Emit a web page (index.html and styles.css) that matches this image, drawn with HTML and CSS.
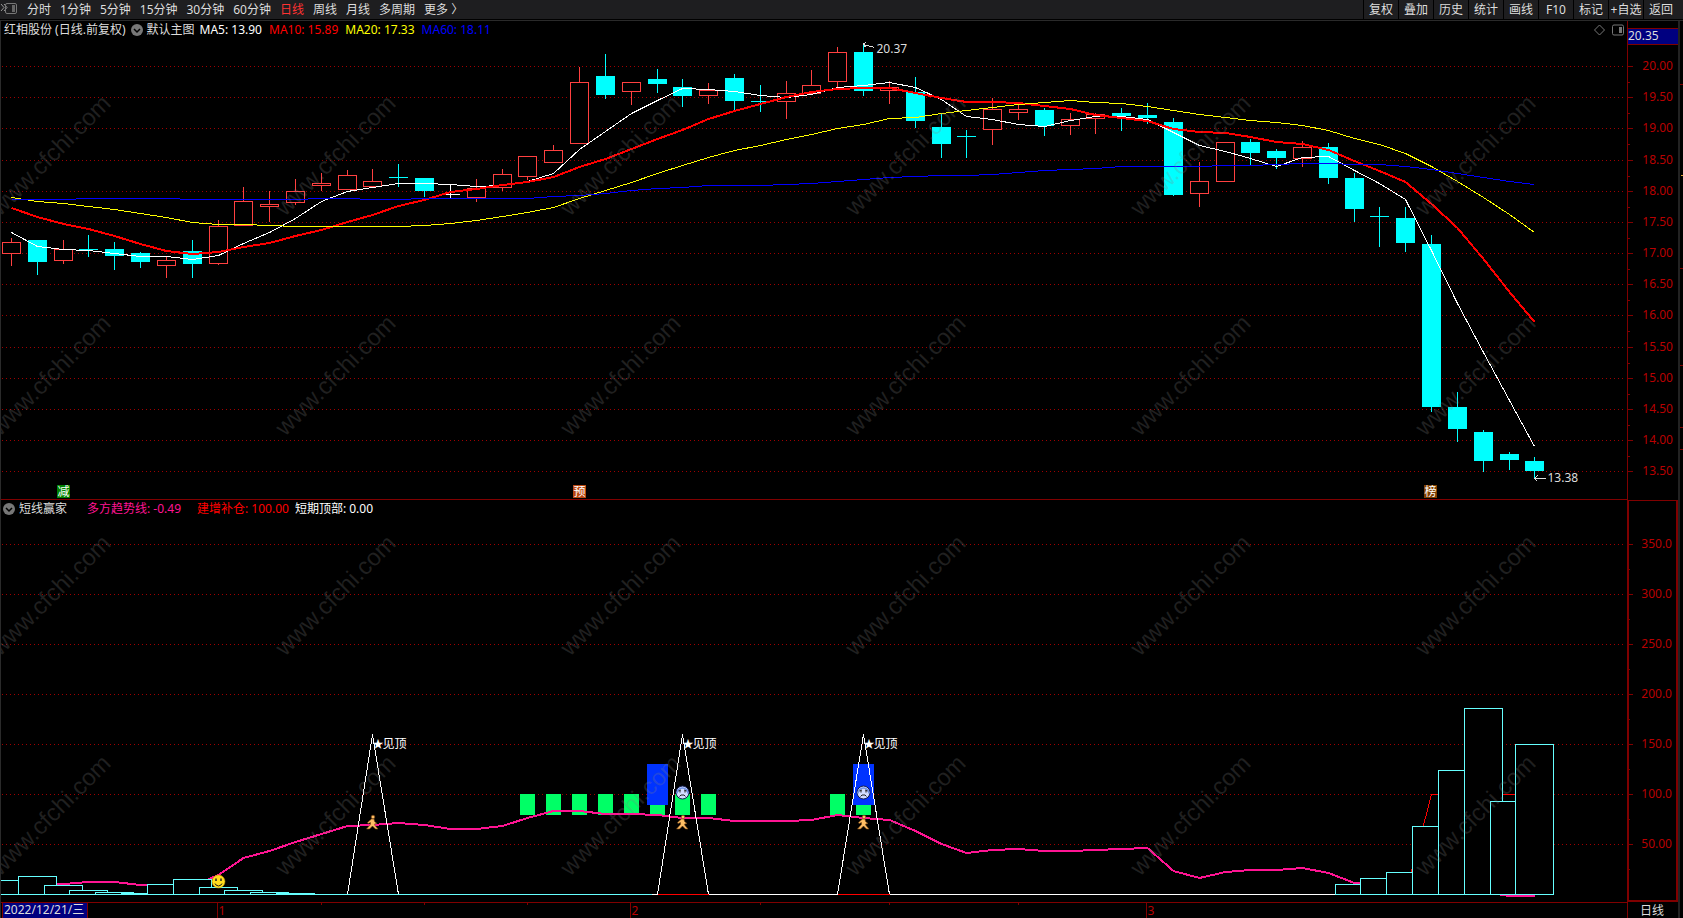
FILE: index.html
```
<!DOCTYPE html>
<html lang="zh-CN">
<head>
  <meta charset="UTF-8">
  <meta name="viewport" content="width=device-width, initial-scale=1.0">
  <title>红相股份 日线</title>
  <link rel="stylesheet" href="styles.css">
</head>
<body>
  <header class="toolbar">
    <button class="panel-toggle" aria-label="侧栏">
      <svg width="18" height="14" viewBox="0 0 18 14">
        <path d="M1 2 L4 5.500 L1 9 M4 2 L7 5.500 L4 9" stroke="#999" fill="none"/>
        <rect x="5.500" y="1.500" width="11" height="10" rx="1.500" stroke="#777" fill="none"/>
        <rect x="12" y="3" width="3" height="7" fill="#666"/>
      </svg>
    </button>
    <nav class="periods">
      <button>分时</button>
      <button>1分钟</button>
      <button>5分钟</button>
      <button>15分钟</button>
      <button>30分钟</button>
      <button>60分钟</button>
      <button class="active">日线</button>
      <button>周线</button>
      <button>月线</button>
      <button>多周期</button>
      <button>更多 〉</button>
    </nav>
    <div class="tools">
      <button>复权</button>
      <button>叠加</button>
      <button>历史</button>
      <button>统计</button>
      <button>画线</button>
      <button>F10</button>
      <button>标记</button>
      <button>+自选</button>
      <button>返回</button>
    </div>
  </header>

  <main class="terminal">
    <section class="plot price-plot">
      <svg id="priceChart" class="chart"></svg>
      <div class="legend">
        <span class="stock">红相股份 (日线.前复权)</span>
        <button class="drop" aria-label="主图指标">
          <svg width="12" height="12" viewBox="0 0 12 12"><circle cx="6" cy="6" r="6" fill="#777"/><path d="M3 5 L6 8 L9 5" stroke="#000" stroke-width="1.500" fill="none"/></svg>
        </button>
        <span class="main-name">默认主图</span>
        <span class="ma5">MA5: 13.90</span>
        <span class="ma10">MA10: 15.89</span>
        <span class="ma20">MA20: 17.33</span>
        <span class="ma60">MA60: 18.11</span>
        <span class="corner">
          <svg width="30" height="12" viewBox="0 0 30 12" fill="none" stroke="#777">
            <path d="M5.500 1 L10.500 6 L5.500 11 L0.500 6 Z"/>
            <rect x="18.500" y="1" width="11" height="10" rx="1.500"/>
            <rect x="25" y="3" width="3" height="6" fill="#777" stroke="none"/>
          </svg>
        </span>
      </div>
    </section>
    <aside class="axis price-axis">
      <svg id="priceAxis" class="chart"></svg>
      <div class="last-price">20.35</div>
    </aside>
    <section class="plot">
      <svg id="indicatorChart" class="chart"></svg>
      <div class="legend indicator-legend">
        <button class="drop" aria-label="副图指标">
          <svg width="12" height="12" viewBox="0 0 12 12"><circle cx="6" cy="6" r="6" fill="#777"/><path d="M3 5 L6 8 L9 5" stroke="#000" stroke-width="1.500" fill="none"/></svg>
        </button>
        <span class="indicator-name">短线赢家</span>
        <span class="trend">多方趋势线: -0.49</span>
        <span class="build">建增补仓: 100.00</span>
        <span class="top">短期顶部: 0.00</span>
      </div>
    </section>
    <aside class="axis indicator-axis">
      <svg id="indicatorAxis" class="chart"></svg>
    </aside>
    <footer class="dates">
      <svg id="dateAxis" class="chart"></svg>
      <span class="current-date">2022/12/21/三</span>
    </footer>
    <button class="period-name">日线</button>
    <div class="strip"><svg id="strip" class="chart"></svg></div>
    <svg id="watermark" class="watermark"></svg>
  </main>
  <script src="chart.js"></script>
</body>
</html>
```
FILE: styles.css
```
* {
  box-sizing: border-box;
}

body {
  margin: 0;
  height: 100vh;
  display: flex;
  flex-direction: column;
  background: #000;
  color: #ddd;
  font-family: "Noto Sans", "Noto Sans CJK SC", sans-serif;
  font-size: 12px;
  line-height: 18px;
  overflow: hidden;
}

button {
  padding: 0;
  border: none;
  background: none;
  color: inherit;
  font: inherit;
  white-space: nowrap;
  cursor: pointer;
}

.toolbar {
  display: flex;
  height: 19px;
  margin-bottom: 1px;
  background: #1e1e20;
}

.panel-toggle {
  width: 18px;
  height: 18px;
  margin-right: 9px;
  display: flex;
  align-items: center;
}

.periods {
  display: flex;
  gap: 9px;
}

.periods .active {
  color: #ff3232;
}

.tools {
  display: flex;
  margin-left: auto;
  margin-right: 5px;
}

.tools button {
  width: 35px;
  border-left: 1px solid #000;
}

.terminal {
  position: relative;
  flex: 1;
  display: grid;
  grid-template-columns: 1fr 51px 5px;
  grid-template-rows: 479fr 402fr 16px;
  border-top: 1px solid #2a2a2a;
  border-left: 1px solid #2a2a2a;
}

.plot,
.axis,
.dates,
.strip {
  position: relative;
  min-width: 0;
  min-height: 0;
}

.price-plot {
  border-bottom: 1px solid #800000;
}

.chart {
  position: absolute;
  top: 0;
  left: 0;
  width: 100%;
  height: 100%;
}

.legend {
  position: relative;
  display: flex;
  align-items: center;
  padding-left: 3px;
  line-height: 17px;
  white-space: nowrap;
}

.drop {
  display: flex;
}

.legend .stock {
  margin-right: 5px;
}

.main-name {
  margin-left: 4px;
}

.ma5 {
  margin-left: 5px;
}

.ma10,
.ma20,
.ma60 {
  margin-left: 7px;
}

.ma5,
.top {
  color: #fff;
}

.ma10,
.build {
  color: #f00;
}

.ma20 {
  color: #ff0;
}

.ma60 {
  color: #00f;
}

.corner {
  display: flex;
  margin-left: auto;
  margin-right: 3px;
}

.indicator-legend {
  padding-left: 2px;
}

.indicator-name {
  margin-left: 4px;
}

.trend {
  margin-left: 20px;
  color: #ff1493;
}

.build {
  margin-left: 16px;
}

.top {
  margin-left: 6px;
}

.price-axis {
  border-left: 1px solid #800000;
}

.indicator-axis {
  border: 2px solid #800000;
  border-top-width: 1px;
}

.last-price {
  position: relative;
  margin-top: 7px;
  height: 17px;
  line-height: 14px;
  background: #000080;
  border-top: 1px solid #800000;
  border-bottom: 1px solid #800000;
}

.dates {
  border-top: 1px solid #800000;
}

.current-date {
  position: relative;
  display: block;
  width: 86px;
  height: 15px;
  margin-left: 1px;
  padding-left: 1px;
  line-height: 14px;
  white-space: nowrap;
  background: #000080;
  border-left: 1px solid #800000;
  border-right: 1px solid #800000;
}

.period-name {
  padding-right: 2px;
  border-left: 1px solid #800000;
  line-height: 15px;
}

.strip {
  grid-column: 3;
  grid-row: 1 / 4;
  border-left: 2px solid #222;
}

.watermark {
  position: absolute;
  top: 0;
  left: 0;
  width: 100%;
  height: 100%;
  pointer-events: none;
  font-family: "Liberation Sans", sans-serif;
  font-size: 24px;
}
```
FILE: chart.js
```
// kind, high, body top, body bottom, low (rows of the 918 row layout)
const candles = [
  ["r", 238, 242, 254, 266], ["c", 240, 240, 262, 275], ["r", 240, 249, 261, 264],
  ["c", 235, 249, 250, 257], ["c", 242, 249, 256, 270], ["c", 252, 253, 262, 268],
  ["r", 256, 260, 266, 278], ["c", 240, 251, 264, 278], ["r", 220, 226, 264, 265],
  ["r", 187, 201, 226, 226], ["r", 191, 204, 207, 222], ["r", 179, 191, 203, 205],
  ["r", 173, 183, 186, 191], ["r", 170, 175, 190, 190], ["r", 169, 181, 187, 187],
  ["c", 164, 177, 178, 187], ["c", 178, 178, 191, 197], ["w", 185, 194, 195, 198],
  ["r", 179, 188, 198, 202], ["r", 169, 174, 188, 191], ["r", 156, 156, 177, 180],
  ["r", 145, 150, 163, 163], ["r", 67, 82, 144, 144], ["c", 54, 76, 95, 99],
  ["r", 82, 82, 92, 105], ["c", 69, 79, 84, 93], ["c", 79, 87, 96, 107],
  ["r", 83, 90, 96, 104], ["c", 74, 78, 101, 110], ["c", 85, 101, 102, 112],
  ["r", 81, 93, 102, 119], ["r", 70, 85, 94, 94], ["r", 47, 52, 82, 88],
  ["c", 45, 52, 91, 96], ["r", 81, 87, 91, 104], ["c", 77, 92, 121, 128],
  ["c", 114, 127, 144, 158], ["c", 130, 136, 137, 158], ["r", 98, 109, 130, 145],
  ["r", 105, 109, 113, 120], ["c", 108, 110, 126, 136], ["r", 113, 119, 126, 135],
  ["r", 113, 114, 119, 134], ["c", 108, 113, 116, 131], ["c", 103, 115, 118, 124],
  ["c", 118, 122, 195, 196], ["r", 162, 181, 194, 207], ["r", 142, 142, 182, 182],
  ["c", 139, 142, 153, 166], ["c", 149, 151, 158, 169], ["r", 141, 147, 159, 167],
  ["c", 143, 147, 178, 184], ["c", 173, 178, 209, 222], ["c", 207, 216, 217, 247],
  ["c", 207, 218, 243, 252], ["c", 235, 244, 407, 412], ["c", 392, 407, 429, 442],
  ["c", 430, 432, 461, 472], ["c", 452, 454, 460, 470], ["c", 457, 461, 471, 478]
];

const ma5 = [232, 246, 249, 250, 253, 256, 256, 259, 255, 243, 232, 218, 201, 191, 187, 183, 183, 184, 186, 185,
  181, 173, 149, 131, 113, 100, 88, 89, 91, 95, 97, 94, 87, 85, 82, 87, 99, 116, 119, 124,
  126, 120, 116, 116, 119, 132, 145, 151, 158, 166, 157, 156, 170, 183, 199, 250, 303, 352, 400, 446];
const ma10 = [208, 217, 224, 229, 236, 244, 251, 254, 252, 247, 243, 236, 230, 222, 215, 206, 200, 192, 189, 185,
  182, 177, 167, 159, 149, 139, 130, 119, 111, 104, 97, 92, 89, 88, 88, 93, 98, 102, 102, 103,
  106, 109, 115, 118, 121, 129, 132, 133, 137, 142, 144, 150, 161, 171, 182, 204, 228, 259, 292, 322];
const ma20 = [197, 201, 203, 206, 209, 213, 217, 222, 224, 224, 225, 226, 226, 226, 226, 226, 225, 223, 220, 216,
  212, 207, 198, 190, 182, 173, 165, 157, 150, 145, 139, 134, 128, 124, 118, 117, 113, 110, 107, 104,
  102, 100, 102, 103, 106, 110, 114, 117, 120, 122, 125, 130, 138, 144, 153, 166, 181, 197, 214, 232];
const ma60 = [199, 199, 199, 198, 198, 198, 198, 199, 199, 199, 199, 199, 198, 198, 199, 199, 198, 198, 198, 198,
  198, 196, 195, 193, 190, 188, 187, 185, 185, 185, 184, 183, 181, 179, 177, 176, 175, 175, 174, 172,
  170, 169, 168, 166, 166, 166, 166, 165, 165, 164, 163, 163, 164, 164, 166, 169, 173, 177, 181, 184];

// indicator values, 0 is the base line
const trend = [8, 9, 11, 13, 13, 10, 10, 9, 20, 37, 44, 53, 61, 69, 70, 72, 70, 66, 66, 69,
  77, 84, 84, 81, 81, 80, 77, 77, 74, 74, 74, 75, 80, 77, 75, 64, 51, 42, 45, 46,
  44, 44, 45, 46, 47, 24, 17, 23, 25, 25, 27, 22, 12, 10, 8, 6, 4, 3, -1, -1];
const boxes = { 0: 14, 1: 18, 2: 9, 3: 4, 4: 2, 5: 1, 6: 10, 7: 15, 8: 7, 9: 4, 10: 2, 11: 1,
  52: 10, 53: 16, 54: 22, 55: 68, 56: 124, 57: 186, 58: 93, 59: 150 };
const greenBars = [20, 21, 22, 23, 24, 25, 26, 27, 32, 33];
const blueBars = [25, 33];
const peaks = [14, 26, 33];

const colors = { r: "#ff4040", c: "#00ffff", w: "#ffffff" };
const grid = "#a00000";
const labelColor = "#b80000";

function line(x1, y1, x2, y2, color, extra = "") {
  return `<line x1="${x1}" y1="${y1}" x2="${x2}" y2="${y2}" stroke="${color}" shape-rendering="crispEdges" ${extra}/>`;
}

function rect(x, y, w, h, fill, stroke = "none") {
  return `<rect x="${x}" y="${y}" width="${w}" height="${h}" fill="${fill}" stroke="${stroke}" shape-rendering="crispEdges"/>`;
}

function poly(points, color, width = 1) {
  return `<polyline points="${points.join(" ")}" fill="none" stroke="${color}" stroke-width="${width}" shape-rendering="crispEdges"/>`;
}

function text(x, y, value, color, anchor = "start", size = 12) {
  return `<text x="${x}" y="${y}" fill="${color}" text-anchor="${anchor}" font-size="${size}">${value}</text>`;
}

function badge(x, y, label, color) {
  return rect(x, y, 13, 13, color) + text(x + 6.5, y + 11, label, "#fff", "middle");
}

function smile(x, y) {
  return `<g transform="translate(${x} ${y})"><circle r="6.5" fill="#ffdc1e" stroke="#c89600" stroke-width=".5"/>
    <path d="M-2.500 -3 V-.5 M2.500 -3 V-.5" stroke="#222" stroke-width="1.500"/>
    <path d="M-3.500 2 L-2.500 3.500 L0 4.500 L2.500 3.500 L3.500 2" fill="none" stroke="#222"/></g>`;
}

function sad(x, y) {
  return `<g transform="translate(${x} ${y})"><circle r="6.5" fill="#d2dcff" stroke="#141e50"/>
    <path d="M-5.500 1 A5.500 5.500 0 0 1 5.500 1" fill="none" stroke="#6e91e6" stroke-width="1.500"/>
    <path d="M-4 -1.500 L-1.500 -2.500 M4 -1.500 L1.500 -2.500 M-2.500 -1.500 V0 M2.500 -1.500 V0" stroke="#222"/>
    <path d="M-3 4 L-1.500 2.500 H1.500 L3 4" fill="none" stroke="#222"/></g>`;
}

function walker(x, y) {
  return `<g transform="translate(${x} ${y})" stroke="#784614" stroke-width=".6" fill="#ffbe64">
    <path d="M-1 -3.500 H1.500 L2 -1 L4.500 1 L2 1.500 L2.500 3 L5.500 6.500 H3 L0 3.500 L-3 6.500 H-6 L-2 2 L-2 0 L-4.500 1 L-5 0 Z"/>
    <circle cx="0.500" cy="-5.500" r="1.800"/></g>`;
}

function size(id) {
  const box = document.getElementById(id).getBoundingClientRect();
  return [box.width, box.height];
}

function draw(id, content) {
  document.getElementById(id).innerHTML = content;
}

function xAt(i, w) {
  return Math.round((10 + 25.82 * i) * w / 1626) + 0.5;
}

function drawPrice() {
  const [w, h] = size("priceChart");
  const y = row => Math.round((row - 21) * h / 478);
  const path = list => list.map((v, i) => xAt(i, w) + "," + (y(v) + 0.5));
  let out = "";
  let axis = "";
  for (let i = 0; i < 14; i++) {
    const gy = y(66 + 31.17 * i) + 0.5;
    out += line(1, gy, w - 3, gy, grid, 'stroke-dasharray="1 3"');
    axis += line(0, gy, 5, gy, "#800000") + text(45, gy + 3.5, (20 - i / 2).toFixed(2), labelColor, "end");
    if (i < 13) {
      const my = y(82 + 31.17 * i) + 0.5;
      axis += line(0, my, 2, my, "#800000");
    }
  }
  candles.forEach(([kind, high, top, bottom, low], i) => {
    const x = xAt(i, w);
    const color = colors[kind];
    out += line(x, y(high), x, y(top), color) + line(x, y(bottom), x, y(low), color);
    if (kind === "r") {
      out += rect(x - 9, y(top) + 0.5, 18, y(bottom) - y(top) - 1, "#000", color);
    } else {
      out += rect(x - 9.5, y(top), 19, y(bottom) - y(top), color);
    }
  });
  out += poly(path(ma5), "#fff");
  out += poly(ma10.map((v, i) => xAt(i, w) + "," + y(v)), "#f00", 2);
  out += poly(path(ma20), "#ff0");
  out += poly(path(ma60), "#00f");

  const hx = xAt(33, w);
  const hy = y(44) + 0.5;
  out += poly([`${hx},${hy}`, `${hx + 11},${hy + 3}`], "#ddd");
  out += poly([`${hx + 3},${hy - 2}`, `${hx},${hy - 1}`, `${hx + 2},${hy + 3}`], "#ddd");
  out += text(hx + 13, hy + 8, "20.37", "#ddd");
  const lx = xAt(59, w);
  const ly = y(478) + 0.5;
  out += poly([`${lx},${ly}`, `${lx + 11},${ly}`], "#ddd");
  out += poly([`${lx + 3},${ly - 3}`, `${lx},${ly}`, `${lx + 3},${ly + 3}`], "#ddd");
  out += text(lx + 13, ly + 3.5, "13.38", "#ddd");

  out += badge(xAt(2, w) - 6.5, y(485), "减", "#008000");
  out += badge(xAt(22, w) - 6.5, y(485), "预", "#b94610");
  out += badge(xAt(55, w) - 7.5, y(485), "榜", "#7f3f00");
  draw("priceChart", out);
  draw("priceAxis", axis);
}

function drawIndicator() {
  const [w, h] = size("indicatorChart");
  const y = v => Math.round((394 - v) * h / 402) + 0.5;
  const at = (i, v) => xAt(i, w) + "," + y(v);
  let out = "";
  let axis = "";
  for (let v = 50; v <= 350; v += 50) {
    out += line(1, y(v), w - 3, y(v), grid, 'stroke-dasharray="1 3"');
    axis += line(0, y(v) - 1, 4, y(v) - 1, "#800000") + line(0, y(v) + 24, 1, y(v) + 24, "#800000");
    axis += text(43, y(v) + 2.5, v < 100 ? v.toFixed(2) : v.toFixed(1), labelColor, "end");
  }
  greenBars.forEach(i => {
    out += rect(xAt(i, w) - 7.5, y(100) - 0.5, 15, y(79) - y(100), "#00ff66");
  });
  blueBars.forEach(i => {
    out += rect(xAt(i, w) - 10.5, y(130) - 0.5, 21, y(89) - y(130), "#0033ff");
  });
  out += poly(trend.map((v, i) => xAt(i, w) + "," + (y(v) + 0.5)), "#ff1493", 2);
  out += poly([at(54, 0), at(55, 100), at(59, 100)], "#f00");
  out += line(1, y(0), xAt(25, w), y(0), "#66ffff");
  out += line(xAt(25, w) - 6, y(0), xAt(59, w), y(0), "#fff");
  for (const i in boxes) {
    const left = Math.max(xAt(+i, w) - 19, -1);
    out += rect(left, y(boxes[i]), xAt(+i, w) + 19 - left, y(0) - y(boxes[i]), "#000", "#66ffff");
  }
  peaks.forEach((i, n) => {
    if (n > 0) {
      out += line(xAt(i - 1, w), y(0), xAt(i + 1, w), y(0), "#f00");
    }
    out += poly([at(i - 1, 0), at(i, 160), at(i + 1, 0)], "#fff");
    out += text(xAt(i, w), y(150) + 3, "★", "#fff", "start", 11);
    out += text(xAt(i, w) + 10, y(150) + 3.5, "见顶", "#fff");
    out += walker(xAt(i, w), y(73) + 1);
    if (n > 0) {
      out += sad(xAt(i, w), y(102));
    }
  });
  out += smile(xAt(8, w), y(13));
  draw("indicatorChart", out);
  draw("indicatorAxis", axis);
}

function drawDates() {
  const [w] = size("dateAxis");
  let out = "";
  [[8, 1], [24, 2], [44, 3]].forEach(([i, month]) => {
    const x = xAt(i, w) - 1;
    out += line(x, 0, x, 15, "#800000") + text(x + 1, 12, month, labelColor);
  });
  [12, 16, 20, 29, 34, 39].forEach(i => {
    out += line(xAt(i, w), 0, xAt(i, w), 2, "#800000");
  });
  draw("dateAxis", out);
}

function drawStrip() {
  const [, h] = size("strip");
  let out = "";
  [84, 268, 365, 427, 449].forEach(row => {
    const y = Math.round((row - 21) * h / 897) + 0.5;
    out += line(0, y, 3, y, "#800000");
  });
  const y = Math.round(154 * h / 897) + 0.5;
  out += line(1, y, 3, y, "#e0a030");
  draw("strip", out);
}

function drawWatermark() {
  const [w, h] = size("watermark");
  let out = "";
  for (let y = 196; y < h; y += 220) {
    for (let x = -1; x < w - 150; x += 285) {
      out += `<text transform="translate(${x} ${y}) rotate(-45)" fill="#808080" fill-opacity=".25">www.cfchi.com</text>`;
    }
  }
  draw("watermark", out);
}

function drawAll() {
  drawPrice();
  drawIndicator();
  drawDates();
  drawStrip();
  drawWatermark();
}

window.addEventListener("resize", drawAll);
drawAll();
```
